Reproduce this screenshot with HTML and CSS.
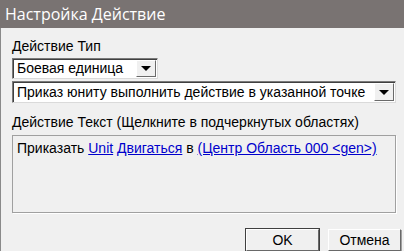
FILE: index.html
```html
<!DOCTYPE html>
<html lang="ru">
<head>
    <meta charset="UTF-8">
    <title>Настройка Действие</title>
    <link rel="stylesheet" href="styles.css">
</head>
<body>
    <div class="window">
        <div class="titlebar">Настройка Действие</div>
        <div class="content">
            <div class="label">Действие Тип</div>
            <div class="combo combo-short">
                <span class="combo-text">Боевая единица</span>
                <span class="combo-btn"><span class="arrow"></span></span>
            </div>
            <div class="combo combo-long">
                <span class="combo-text">Приказ юниту выполнить действие в указанной точке</span>
                <span class="combo-btn"><span class="arrow"></span></span>
            </div>
            <div class="label label-text">Действие Текст (Щелкните в подчеркнутых областях)</div>
            <div class="text-box">
                Приказать <a href="#">Unit</a> <a href="#">Двигаться</a> в <a href="#">(Центр Область 000 &lt;gen&gt;)</a>
            </div>
            <div class="buttons">
                <button class="btn btn-default">OK</button>
                <button class="btn">Отмена</button>
            </div>
        </div>
    </div>
</body>
</html>
```

FILE: styles.css
```css
html, body {
    margin: 0;
    padding: 0;
}
body {
    width: 404px;
    height: 251px;
    overflow: hidden;
    background: #f0f0f0;
    font-family: "Liberation Sans", Arial, sans-serif;
    font-size: 14px;
    color: #000;
}
.window {
    height: 251px;
    border-left: 1px solid #8a8a8a;
    box-sizing: border-box;
}
.titlebar {
    height: 28px;
    line-height: 28px;
    background: #797372;
    color: #fff;
    font-family: "Open Sans", "Liberation Sans", sans-serif;
    font-size: 16px;
    padding-left: 5px;
    margin-left: -1px;
}
.content {
    padding: 10px 0 0 11px;
}
.label {
    line-height: 16px;
    height: 16px;
}
.combo {
    display: flex;
    align-items: stretch;
    background: #fff;
    border: 1px solid #7a7a7a;
    border-right-color: #dadada;
    border-bottom-color: #dadada;
    box-shadow: inset 1px 1px 0 #404040;
    box-sizing: border-box;
    margin-top: 4px;
}
.combo-short {
    width: 146px;
    height: 21px;
}
.combo-long {
    width: 384px;
    height: 22px;
    margin-top: 2px;
}
.combo-text {
    flex: 1;
    padding: 0 0 0 4px;
    line-height: 19px;
    white-space: nowrap;
    overflow: hidden;
}
.combo-long .combo-text {
    line-height: 20px;
}
.combo-btn {
    width: 18px;
    margin: 1px 1px 1px 0;
    background: #f0f0f0;
    border: 1px solid #fff;
    border-right-color: #6a6a6a;
    border-bottom-color: #6a6a6a;
    display: flex;
    align-items: center;
    justify-content: center;
}
.arrow {
    width: 0;
    height: 0;
    border-left: 5px solid transparent;
    border-right: 5px solid transparent;
    border-top: 5px solid #000;
}
.label-text {
    margin-top: 11px;
}
.text-box {
    margin-top: 5px;
    width: 384px;
    height: 78px;
    box-sizing: border-box;
    border: 1px solid #a0a0a0;
    box-shadow: 1px 1px 0 #fff;
    padding: 3px 4px;
    line-height: 18px;
}
.text-box a {
    color: #0000cc;
    text-decoration: underline;
}
.buttons {
    display: flex;
    justify-content: flex-end;
    gap: 9px;
    margin-top: 16px;
    padding-right: 3px;
}
.btn {
    width: 73px;
    height: 22px;
    padding: 0;
    font-family: "Liberation Sans", Arial, sans-serif;
    font-size: 14px;
    background: #f0f0f0;
    border: 1px solid #fff;
    border-right-color: #696969;
    border-bottom-color: #696969;
    box-shadow: 1px 1px 0 #a0a0a0;
}
.btn-default {
    outline: 1px solid #404040;
}
```
